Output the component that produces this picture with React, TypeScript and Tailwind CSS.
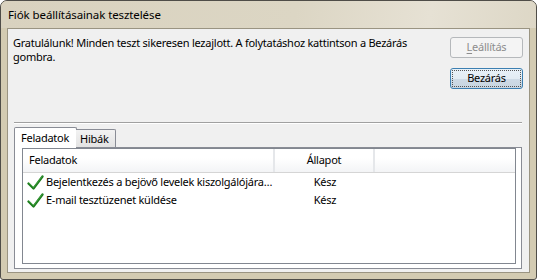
import React from "react";

const font = { fontFamily: '"Noto Sans", "Open Sans", sans-serif' };

function Check() {
  return (
    <svg width="17" height="15" viewBox="0 0 17 15" className="shrink-0">
      <path d="M1.5 8.5 L6.5 13.5 L15.5 1.5" fill="none" stroke="#1d7d1d" strokeWidth="2.3" strokeLinecap="round" strokeLinejoin="round" />
      <path d="M2 8 L6.5 12.5 L15 1.5" fill="none" stroke="#4fae4f" strokeWidth="0.7" strokeLinecap="round" strokeLinejoin="round" />
    </svg>
  );
}

export default function App() {
  return (
    <div
      className="w-[537px] h-[280px] flex flex-col border border-[#4f4d48] rounded-t-[7px] rounded-b-[3px] overflow-hidden bg-[#d3cbb2] text-[11px] tracking-[-0.25px] text-black"
      style={font}
    >
      {/* Title bar */}
      <div className="h-[27px] shrink-0 flex items-center pl-[7px] bg-[linear-gradient(100deg,#d9d2bf_0%,#dcd6c4_55%,#e6e1d4_80%,#ddd7c6_100%)]">
        <span className="text-[11.5px] tracking-[-0.1px] leading-none">Fiók beállításainak tesztelése</span>
      </div>

      {/* Client area */}
      <div className="flex-1 mx-[6px] mb-[6px] border border-[#9a9482] bg-[#f0f0f0] flex flex-col">
        {/* Top section */}
        <div className="h-[93px] shrink-0 flex">
          <div className="flex-1 pl-[5px] pt-[7px] leading-[14px] pr-[10px]">
            Gratulálunk! Minden teszt sikeresen lezajlott. A folytatáshoz kattintson a Bezárás gombra.
          </div>
          <div className="w-[73px] mr-[6px] pt-[8px] flex flex-col gap-[10px] shrink-0">
            <div className="h-[21px] border border-[#b5b8bb] rounded-[3px] bg-[#f4f4f4] flex items-center justify-center text-[#8d8d8d]">
              <span>
                <span className="underline underline-offset-[2px]">L</span>eállítás
              </span>
            </div>
            <div className="h-[21px] border border-[#3c7fb1] rounded-[3px] p-[1px] bg-[linear-gradient(#e8f1f8_0%,#e3ecf3_50%,#cfdbe6_51%,#c8d5e1_100%)]">
              <div className="h-full border border-dotted border-[#555] flex items-center justify-center">
                Bezárás
              </div>
            </div>
          </div>
        </div>

        {/* Separator */}
        <div className="mx-[6px] mr-[7px] h-[2px] border-t border-[#a0a0a0] border-b border-b-white" />

        {/* Tabs */}
        <div className="flex-1 flex flex-col pl-[6px] pr-[7px] pt-[3px] pb-[3px]">
          <div className="h-[21px] flex items-end relative z-10">
            <div className="h-[21px] w-[63px] border border-[#898c95] border-b-0 rounded-t-[2px] bg-white pl-[6px] pt-[2px] leading-[16px]">
              Feladatok
            </div>
            <div className="h-[18px] w-[40px] -ml-[1px] border border-[#898c95] border-l-0 border-b-0 rounded-tr-[2px] bg-[linear-gradient(#f2f2f2,#e3e3e3)] pl-[4px] pt-[1px] leading-[16px] mb-[1px]">
              Hibák
            </div>
          </div>
          <div className="flex-1 -mt-[1px] border border-[#898c95] bg-white pl-[7px] pr-[5px] pb-[4px] flex">
            <div className="flex-1 border border-[#828790] bg-white flex flex-col">
              {/* Header */}
              <div className="h-[24px] flex border-b border-[#d5d5d5] bg-[linear-gradient(#ffffff_0%,#ffffff_40%,#f3f4f6_100%)]">
                <div className="w-[252px] pl-[6px] flex items-center border-r-2 border-[#e5e7ea]">Feladatok</div>
                <div className="w-[100px] flex items-center justify-center border-r-2 border-[#e5e7ea]">Állapot</div>
                <div className="flex-1" />
              </div>
              {/* Rows */}
              <div className="flex flex-col">
                <div className="h-[18px] flex items-center">
                  <div className="w-[252px] pl-[4px] flex items-center gap-[2px] whitespace-nowrap">
                    <Check />
                    <span>Bejelentkezés a bejövő levelek kiszolgálójára…</span>
                  </div>
                  <div className="w-[100px] text-center">Kész</div>
                </div>
                <div className="h-[18px] flex items-center">
                  <div className="w-[252px] pl-[4px] flex items-center gap-[2px] whitespace-nowrap">
                    <Check />
                    <span>E-mail tesztüzenet küldése</span>
                  </div>
                  <div className="w-[100px] text-center">Kész</div>
                </div>
              </div>
            </div>
          </div>
        </div>
      </div>
    </div>
  );
}
